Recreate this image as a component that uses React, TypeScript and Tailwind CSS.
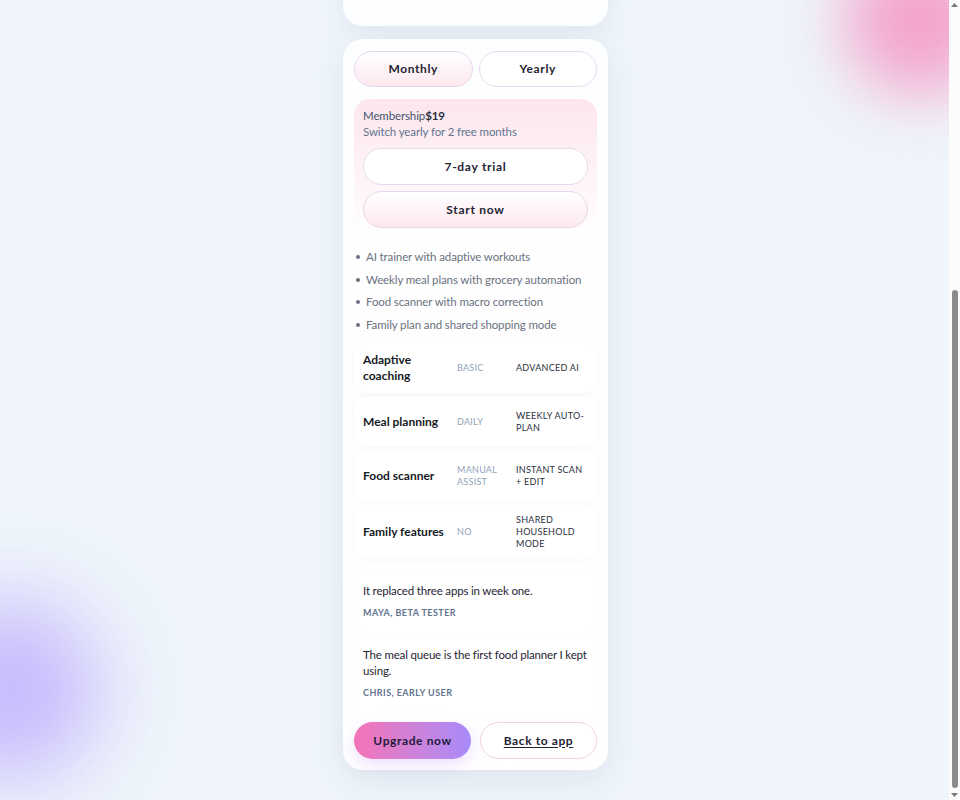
import { useLayoutEffect } from 'react';

const features = [
  'AI trainer with adaptive workouts',
  'Weekly meal plans with grocery automation',
  'Food scanner with macro correction',
  'Family plan and shared shopping mode',
];

const compare = [
  { name: 'Adaptive coaching', basic: 'Basic', pro: 'Advanced AI' },
  { name: 'Meal planning', basic: 'Daily', pro: 'Weekly auto-plan' },
  { name: 'Food scanner', basic: 'Manual assist', pro: 'Instant scan + edit' },
  { name: 'Family features', basic: 'No', pro: 'Shared household mode' },
];

const quotes = [
  { text: 'It replaced three apps in week one.', who: 'Maya, beta tester' },
  { text: 'The meal queue is the first food planner I kept using.', who: 'Chris, early user' },
];

function Scrollbar() {
  // window scrollbar, page sits scrolled to the bottom
  return (
    <div className="pointer-events-none fixed right-0 top-0 z-10 h-screen w-[11px] bg-[#fcfcfc]">
      <svg className="absolute left-[2px] top-[3px]" width="7" height="4" viewBox="0 0 7 4">
        <path d="M3.5 0L7 4H0z" fill="#7a7a7a" />
      </svg>
      <div className="absolute left-[2.5px] top-[290px] h-[498px] w-[6px] rounded-full bg-[#8b8b8b]" />
      <svg className="absolute bottom-[3px] left-[2px]" width="7" height="4" viewBox="0 0 7 4">
        <path d="M0 0h7L3.5 4z" fill="#7a7a7a" />
      </svg>
    </div>
  );
}

export default function App() {
  useLayoutEffect(() => {
    window.scrollTo(0, document.documentElement.scrollHeight);
  }, []);

  return (
    <div
      className="relative min-h-screen bg-[#eff5fb] pl-[2px] pr-[11px] text-[#1a1f2e]"
      style={{ fontFamily: 'Lato, "Noto Sans", sans-serif' }}
    >
      {/* background glows */}
      <div className="pointer-events-none fixed -top-[55px] right-[-35px] h-[150px] w-[150px] rounded-full bg-[#f49ac6] blur-[32px] opacity-90" />
      <div className="pointer-events-none fixed -left-[80px] top-[600px] h-[180px] w-[180px] rounded-full bg-[#c4b5fd] blur-[40px] opacity-90" />
      <Scrollbar />

      <div className="relative mx-auto flex w-[265px] flex-col gap-[13px] pt-[25px] pb-[30px]">
        {/* hero card (mostly above the fold) */}
        <div className="flex h-[440px] flex-col justify-end rounded-[20px] bg-white/90 px-[22px] pb-[24px] shadow-[0_8px_24px_rgba(148,163,184,0.15)]">
          <p className="text-[22px] font-bold leading-tight">Go Pro</p>
          <p className="mt-2 text-[11.5px] text-slate-500">
            Coaching, meal planning and tracking in one place
          </p>
          <p className="mt-1 text-[11.5px] text-slate-500">
            Everything you need for lasting change, daily logging
          </p>
        </div>

        {/* pricing card */}
        <div className="flex flex-col rounded-[20px] bg-gradient-to-b from-white/90 to-white px-[11px] pt-[12px] pb-[11px] shadow-[0_10px_30px_rgba(148,163,184,0.18)]">
          <div className="grid grid-cols-2 gap-[6px]">
            <button className="h-[36px] rounded-full border border-[#e6d6ec] bg-gradient-to-b from-white to-[#fde8ef] text-[12px] font-bold tracking-[0.05em] text-[#1f2433]">
              Monthly
            </button>
            <button className="h-[36px] rounded-full border border-[#e6dcef] bg-white text-[12px] font-bold tracking-[0.05em] text-[#1f2433]">
              Yearly
            </button>
          </div>

          <div className="mt-[12px] rounded-[16px] bg-gradient-to-b from-[#fde6ee] to-white px-[9px] pt-[9px] pb-[11px]">
            <p className="text-[11.5px] leading-[16px] tracking-[-0.01em] text-slate-600">
              Membership<span className="font-bold text-[#2a2f3d]">$19</span>
            </p>
            <p className="text-[11.5px] leading-[16px] tracking-[-0.01em] text-slate-500">Switch yearly for 2 free months</p>
            <div className="mt-[8px] flex flex-col gap-[6px]">
              <button className="h-[37px] rounded-full border border-[#e4dcee] bg-white text-[12px] font-bold tracking-[0.06em] text-[#1f2433]">
                7-day trial
              </button>
              <button className="h-[37px] rounded-full border border-[#e6d6ec] bg-gradient-to-b from-white to-[#fde8ef] text-[12px] font-bold tracking-[0.06em] text-[#1f2433]">
                Start now
              </button>
            </div>
          </div>

          <ul className="mt-[10px] flex flex-col gap-[6px] pl-[2px]">
            {features.map((f) => (
              <li key={f} className="flex items-center gap-[6px] text-[11.5px] leading-[16.5px] tracking-[-0.01em] text-[#6b7280]">
                <span className="h-[4px] w-[4px] shrink-0 rounded-full bg-[#6b7280]" />
                {f}
              </li>
            ))}
          </ul>

          <div className="mt-[10px] flex flex-col gap-[4px]">
            {compare.map((c) => (
              <div
                key={c.name}
                className="grid min-h-[50px] grid-cols-[94px_59px_1fr] items-center rounded-[12px] bg-white px-[9px] py-[9px] shadow-[0_1px_6px_rgba(148,163,184,0.07)]"
              >
                <span className="pr-2 text-[12px] font-bold leading-[16px] text-[#161a24]">{c.name}</span>
                <span className="pr-2 text-[9px] uppercase leading-[12px] tracking-[0.03em] text-slate-400">{c.basic}</span>
                <span className="text-[9px] uppercase leading-[12px] tracking-[0.03em] text-[#2a2f3d]">{c.pro}</span>
              </div>
            ))}
          </div>

          <div className="mt-[12px] flex flex-col gap-[3px]">
            {quotes.map((q) => (
              <div key={q.who} className="rounded-[12px] bg-white py-[12px] pl-[9px] pr-[4px]">
                <p className="text-[11.5px] leading-[16px] tracking-[-0.015em] text-[#1f2433]">{q.text}</p>
                <p className="mt-[7px] text-[9px] font-bold uppercase tracking-[0.05em] text-slate-500">{q.who}</p>
              </div>
            ))}
          </div>

          <div className="mt-[11px] grid grid-cols-[117px_117px] justify-between">
            <button className="h-[37px] rounded-full bg-gradient-to-r from-[#f472b6] to-[#a78bfa] text-[12px] font-bold tracking-[0.05em] text-[#1e1b3a] shadow-[0_6px_16px_rgba(192,132,252,0.25)]">
              Upgrade now
            </button>
            <button className="h-[37px] rounded-full border border-[#f3d3df] bg-white text-[12px] font-bold tracking-[0.05em] text-[#1f2433] underline underline-offset-2">
              Back to app
            </button>
          </div>
        </div>
      </div>
    </div>
  );
}
